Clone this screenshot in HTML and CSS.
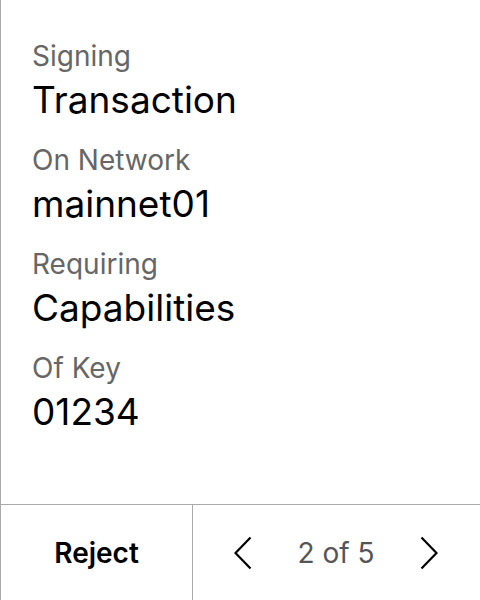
FILE: index.html
```html
<!DOCTYPE html>
<html>
<head>
<meta charset="utf-8">
<link rel="stylesheet" href="styles.css">
</head>
<body>
<div class="screen">
  <div class="details">
    <div class="field">
      <div class="label">Signing</div>
      <div class="value">Transaction</div>
    </div>
    <div class="field">
      <div class="label">On Network</div>
      <div class="value">mainnet01</div>
    </div>
    <div class="field">
      <div class="label">Requiring</div>
      <div class="value">Capabilities</div>
    </div>
    <div class="field">
      <div class="label">Of Key</div>
      <div class="value">01234</div>
    </div>
  </div>
  <div class="actions">
    <div class="reject">Reject</div>
    <div class="pager">
      <svg class="chev" width="18" height="34" viewBox="0 0 18 34"><path d="M16.5 1.5 L1.5 17 L16.5 32.5" fill="none" stroke="#000" stroke-width="2.2"/></svg>
      <span class="count">2 of 5</span>
      <svg class="chev" width="18" height="34" viewBox="0 0 18 34"><path d="M1.5 1.5 L16.5 17 L1.5 32.5" fill="none" stroke="#000" stroke-width="2.2"/></svg>
    </div>
  </div>
</div>
</body>
</html>
```
FILE: styles.css
```css
html, body {
  margin: 0;
  padding: 0;
  background: #fff;
}
.screen {
  width: 480px;
  height: 600px;
  box-sizing: border-box;
  border-left: 1px solid #aaa;
  display: flex;
  flex-direction: column;
  font-family: Inter, "Noto Sans", sans-serif;
}
.details {
  flex: 1;
  padding: 38px 0 0 31px;
  display: flex;
  flex-direction: column;
  gap: 16px;
}
.field {
  display: flex;
  flex-direction: column;
}
.label {
  font-size: 28px;
  line-height: 36px;
  color: #666;
}
.value {
  font-size: 37px;
  line-height: 52px;
  color: #000;
}
.actions {
  height: 96px;
  box-sizing: border-box;
  border-top: 1px solid #aaa;
  display: flex;
}
.reject {
  width: 191px;
  border-right: 1px solid #aaa;
  display: flex;
  align-items: center;
  justify-content: center;
  font-size: 28px;
  font-weight: 600;
  color: #000;
}
.pager {
  flex: 1;
  display: flex;
  align-items: center;
  justify-content: space-between;
  padding: 0 42px 0 41px;
}
.count {
  font-size: 28px;
  color: #555;
}
```
